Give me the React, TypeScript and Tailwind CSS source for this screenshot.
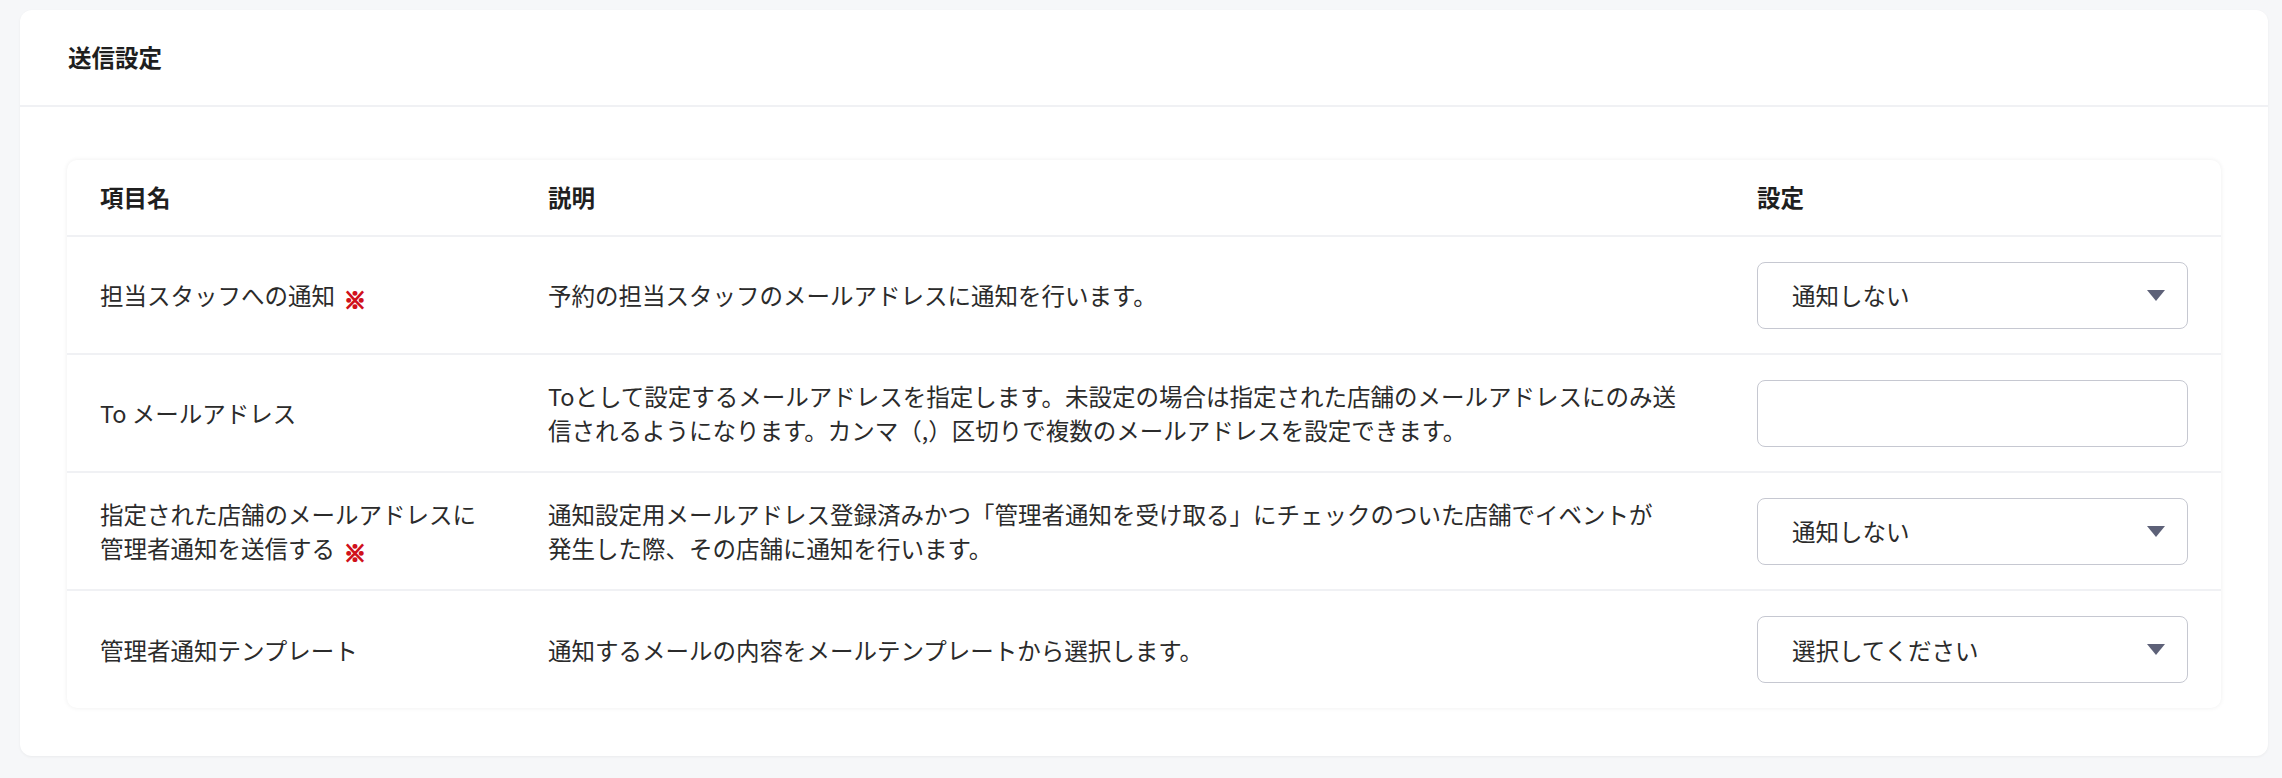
import React from "react";

const Caret = () => (
  <svg width="18" height="11" viewBox="0 0 18 11" className="shrink-0">
    <polygon points="0,0 18,0 9,11" fill="#5d6178" />
  </svg>
);

const Req = () => (
  <span className="ml-[9px] text-[22px] font-bold text-[#d0101b] [-webkit-text-stroke:1.6px_#d0101b] relative top-[3px] leading-none">※</span>
);

const Select = ({ value }: { value: string }) => (
  <div className="w-full h-[67px] rounded-[8px] border-[1.5px] border-[#c6c8d1] bg-white flex items-center justify-between pl-[34px] pr-[22px]">
    <span className="text-[23.5px] text-[#2b2b2b]">{value}</span>
    <Caret />
  </div>
);

const Input = () => (
  <div className="w-full h-[67px] rounded-[8px] border-[1.5px] border-[#c6c8d1] bg-white" />
);

type Row = { name: React.ReactNode; desc: React.ReactNode; control: React.ReactNode };

const rows: Row[] = [
  {
    name: (
      <>
        担当スタッフへの通知
        <Req />
      </>
    ),
    desc: <>予約の担当スタッフのメールアドレスに通知を行います。</>,
    control: <Select value="通知しない" />,
  },
  {
    name: <>To メールアドレス</>,
    desc: (
      <>
        Toとして設定するメールアドレスを指定します。未設定の場合は指定された店舗のメールアドレスにのみ送
        <br />
        信されるようになります。カンマ（,）区切りで複数のメールアドレスを設定できます。
      </>
    ),
    control: <Input />,
  },
  {
    name: (
      <>
        指定された店舗のメールアドレスに
        <br />
        管理者通知を送信する
        <Req />
      </>
    ),
    desc: (
      <>
        通知設定用メールアドレス登録済みかつ「管理者通知を受け取る」にチェックのついた店舗でイベントが
        <br />
        発生した際、その店舗に通知を行います。
      </>
    ),
    control: <Select value="通知しない" />,
  },
  {
    name: <>管理者通知テンプレート</>,
    desc: <>通知するメールの内容をメールテンプレートから選択します。</>,
    control: <Select value="選択してください" />,
  },
];

export default function App() {
  return (
    <div
      className="min-h-screen bg-[#f6f7f9] pt-[10px] pl-[20px] pr-[14px] pb-[22px] text-[#2b2b2b]"
      style={{ fontFamily: '"Noto Sans CJK JP", "Noto Sans", sans-serif' }}
    >
      <div className="bg-white rounded-[12px] shadow-[0_1px_3px_rgba(0,0,0,0.05)]">
        <div className="h-[97px] flex items-center px-[48px] border-b-2 border-[#f0f1f4]">
          <h2 className="text-[23.5px] font-bold text-[#1f1f1f]">送信設定</h2>
        </div>
        <div className="pt-[53px] px-[47px] pb-[48px]">
          <div className="rounded-[10px] bg-white shadow-[0_0_5px_rgba(0,0,0,0.07)]">
            <div className="grid grid-cols-[448px_1209px_1fr] h-[77px] border-b-2 border-[#f0f1f4] text-[23.5px] font-bold text-[#1f1f1f]">
              <div className="px-[33px] flex items-center">項目名</div>
              <div className="px-[33px] flex items-center">説明</div>
              <div className="px-[33px] flex items-center">設定</div>
            </div>
            {rows.map((r, i) => (
              <div
                key={i}
                className={
                  i < rows.length - 1
                    ? "grid grid-cols-[448px_1209px_1fr] h-[118px] border-b-2 border-[#f0f1f4] text-[23.5px] leading-[34px]"
                    : "grid grid-cols-[448px_1209px_1fr] h-[117px] text-[23.5px] leading-[34px]"
                }
              >
                <div className="px-[33px] flex items-center">
                  <div>{r.name}</div>
                </div>
                <div className="px-[33px] flex items-center">
                  <div className="whitespace-nowrap">{r.desc}</div>
                </div>
                <div className="px-[33px] flex items-center">{r.control}</div>
              </div>
            ))}
          </div>
        </div>
      </div>
    </div>
  );
}
